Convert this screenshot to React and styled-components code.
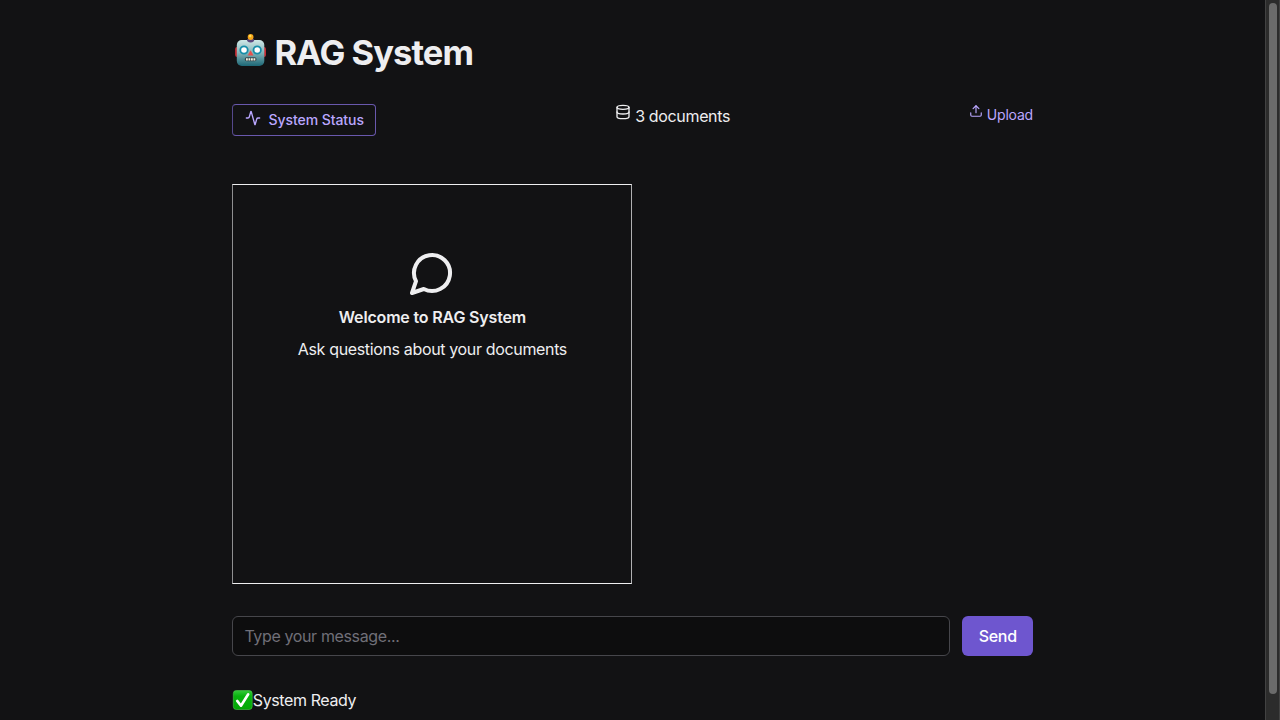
import React from "react";
import styled, { createGlobalStyle } from "styled-components";
import { Activity, Database, Upload } from "lucide-react";

const GlobalStyle = createGlobalStyle`
  * { box-sizing: border-box; }
  body {
    margin: 0;
    overflow: hidden;
    background: #121214;
    color: #eeeef0;
    font: 400 16px/24px Inter, "Liberation Sans", sans-serif;
  }
`;

const Shell = styled.div`
  display: flex;
  height: 720px;
  overflow: hidden;
`;

const Page = styled.main`
  flex: 1;
  min-width: 0;
  padding: 32px 232px 0 232.4px;
`;

const Title = styled.h1`
  display: flex;
  align-items: flex-start;
  gap: 6px;
  height: 40px;
  margin: 0;
  font-size: 34.5px;
  line-height: 41px;
  font-weight: 700;
`;

const Text = styled.span`
  letter-spacing: ${(p) => p.$spacing || 0}px;
  white-space: nowrap;
`;

const Toolbar = styled.div`
  display: flex;
  justify-content: space-between;
  align-items: flex-start;
  height: 32px;
  margin-top: 32px;
`;

const StatusButton = styled.button`
  display: flex;
  align-items: center;
  gap: 7.5px;
  width: 143.5px;
  height: 32px;
  padding: 0 0 0 11.6px;
  border: 1px solid #6958ad;
  border-left-color: #55488c;
  border-radius: 4px;
  background: transparent;
  color: #baa7ff;
  font: 500 14px/20px Inter, sans-serif;

  svg { margin-bottom: 5px; }
`;

const Documents = styled.div`
  display: flex;
  gap: 4.5px;
`;

const UploadLink = styled.a`
  display: flex;
  gap: 4px;
  color: #baa7ff;
  font-size: 14px;
  line-height: 22px;
`;

const ChatPanel = styled.section`
  display: flex;
  flex-direction: column;
  align-items: center;
  width: 400px;
  height: 400px;
  margin-top: 48px;
  padding-top: 64px;
  border: 1px solid #eeeef0;
  border-left-color: #8f8f91;
  border-right-color: #b0b0b2;
`;

const Welcome = styled.strong`
  margin-top: 8px;
  font-weight: 600;
`;

const Prompt = styled.p`
  margin: 8px 0 0;
`;

const Composer = styled.form`
  display: flex;
  gap: 12px;
  height: 40px;
  margin-top: 32px;
`;

const MessageInput = styled.input`
  flex: 1;
  min-width: 0;
  padding: 0 11px;
  border: 1px solid #46464b;
  border-radius: 6px;
  outline: 0;
  background: #0d0d0e;
  color: #eeeef0;
  font: inherit;
  letter-spacing: -0.37px;

  &::placeholder { color: #706f78; opacity: 1; }
`;

const SendButton = styled.button`
  width: 70.6px;
  padding: 0;
  border: 0;
  border-radius: 6px;
  background: #6e56cf;
  color: #fff;
  font: 500 16px/24px Inter, sans-serif;
`;

const Ready = styled.div`
  display: flex;
  align-items: center;
  height: 24px;
  margin-top: 32px;
`;

const ScrollTrack = styled.aside`
  width: 15px;
  padding: 3px 3px 0;
  border-left: 1px solid #424242;
  border-right: 1px solid #424242;
  background: #2c2c2c;
`;

const ScrollThumb = styled.div`
  width: 8px;
  height: 691px;
  border-radius: 4px;
  background: #6b6b6b;
`;

function Robot() {
  return (
    <svg width="36" height="40" viewBox="-.8 0 36 40" aria-hidden="true">
      <defs>
        <linearGradient id="face" x2="0" y2="1">
          <stop stopColor="#cfe8e7" />
          <stop offset=".48" stopColor="#86b6ba" />
          <stop offset="1" stopColor="#1c6776" />
        </linearGradient>
      </defs>
      <rect x="2.3" y="15" width="4" height="10" rx="2" fill="#c52c32" />
      <rect x="29.2" y="15" width="4" height="10" rx="2" fill="#c52c32" />
      <rect x="4" y="8" width="27.5" height="26" rx="5" fill="url(#face)" />
      <path d="M14.3 7.3q3.5-1.5 7 0v1.6q-3.5 3-7 0z" fill="#5a477d" />
      <circle cx="17.8" cy="5" r="2.9" fill="#f6a51b" />
      <circle cx="17.4" cy="4" r="1.2" fill="#ffe35a" />
      <circle cx="11.2" cy="18" r="3.7" fill="#fff" stroke="#168ea9" strokeWidth="1.8" />
      <circle cx="24.4" cy="18" r="3.7" fill="#fff" stroke="#168ea9" strokeWidth="1.8" />
      <path d="M17.8 18.2l2.9 5.4h-5.8z" fill="#e8504c" />
      <rect x="12" y="25.3" width="11.7" height="4" rx="1.8" fill="#37464c" />
      <path d="M13.2 27.4h9.4" stroke="#f1f1df" strokeWidth="2.3" strokeDasharray="1.8 .7" />
    </svg>
  );
}

function ChatBubble() {
  return (
    <svg width="48" height="48" viewBox="0 0 24 24" fill="none" stroke="currentColor" strokeWidth="2" strokeLinecap="round" strokeLinejoin="round" aria-hidden="true">
      <path d="M7.9 20A9 9 0 1 0 4 16.1L2 22Z" />
    </svg>
  );
}

function CheckBadge() {
  return (
    <svg width="20.4" height="24" viewBox="-.6 0 20.4 24" overflow="visible" aria-hidden="true">
      <defs>
        <linearGradient id="check" x2="0" y2="1">
          <stop stopColor="#35ca3b" />
          <stop offset=".3" stopColor="#08b30e" />
          <stop offset="1" stopColor="#03a706" />
        </linearGradient>
      </defs>
      <rect x=".7" y="2.5" width="18.9" height="19" rx="3" fill="url(#check)" stroke="#4ac74b" strokeWidth=".6" />
      <path d="M4.6 12.9l3.8 4.8 7.2-11.4" fill="none" stroke="#fff" strokeWidth="2.6" strokeLinecap="round" strokeLinejoin="round" />
    </svg>
  );
}

export default function App() {
  return (
    <>
      <GlobalStyle />
      <Shell>
        <Page>
          <Title><Robot /><Text $spacing={-0.95}>RAG System</Text></Title>
          <Toolbar>
            <StatusButton type="button"><Activity size={16} /><Text $spacing={-0.06}>System Status</Text></StatusButton>
            <Documents><Database size={16} /><Text $spacing={-0.34}>3 documents</Text></Documents>
            <UploadLink><Upload size={14} /><Text $spacing={-0.2}>Upload</Text></UploadLink>
          </Toolbar>
          <ChatPanel>
            <ChatBubble />
            <Welcome><Text $spacing={-0.17}>Welcome to RAG System</Text></Welcome>
            <Prompt><Text $spacing={-0.35}>Ask questions about your documents</Text></Prompt>
          </ChatPanel>
          <Composer>
            <MessageInput placeholder="Type your message..." />
            <SendButton type="button"><Text $spacing={-0.3}>Send</Text></SendButton>
          </Composer>
          <Ready><CheckBadge /><Text $spacing={-0.39}>System Ready</Text></Ready>
        </Page>
        <ScrollTrack><ScrollThumb /></ScrollTrack>
      </Shell>
    </>
  );
}
